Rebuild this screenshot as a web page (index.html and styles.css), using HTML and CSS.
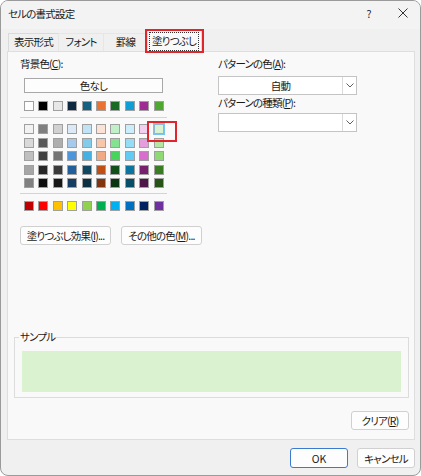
FILE: index.html
```html
<!DOCTYPE html>
<html lang="ja">
<head>
<meta charset="utf-8">
<title>セルの書式設定</title>
<link rel="stylesheet" href="styles.css">
</head>
<body>
<div class="window">
  <div class="titlebar">
    <span class="title">セルの書式設定</span>
    <span class="help">?</span>
    <span class="close"><svg width="10" height="10" viewBox="0 0 10 10"><path d="M0.5 0.5 L9.5 9.5 M9.5 0.5 L0.5 9.5" stroke="#333" stroke-width="1" fill="none"/></svg></span>
  </div>
  <div class="tabs">
    <div class="tab w1">表示形式</div>
    <div class="tab w2">フォント</div>
    <div class="tab w3">罫線</div>
    <div class="tab sel"><span class="focus">塗りつぶし</span></div>
  </div>
  <div class="panel">
    <div class="top">
      <div class="left">
        <div class="lbl">背景色(<u>C</u>):</div>
        <button class="nocolor">色なし</button>
        <div class="swatches row1">
          <span class="sw" style="background:#ffffff"></span>
          <span class="sw" style="background:#000000"></span>
          <span class="sw" style="background:#e8e8e8"></span>
          <span class="sw" style="background:#0e2841"></span>
          <span class="sw" style="background:#156082"></span>
          <span class="sw" style="background:#e97132"></span>
          <span class="sw" style="background:#196b24"></span>
          <span class="sw" style="background:#0f9ed5"></span>
          <span class="sw" style="background:#a02b93"></span>
          <span class="sw" style="background:#4ea72e"></span>
        </div>
        <div class="sep"></div>
        <div class="swatches grid">
          <span class="sw" style="background:#f2f2f2"></span>
          <span class="sw" style="background:#7f7f7f"></span>
          <span class="sw" style="background:#d1d1d1"></span>
          <span class="sw" style="background:#dceaf7"></span>
          <span class="sw" style="background:#c0e4f5"></span>
          <span class="sw" style="background:#fbe2d5"></span>
          <span class="sw" style="background:#c1f0c8"></span>
          <span class="sw" style="background:#caeefb"></span>
          <span class="sw" style="background:#f2ceef"></span>
          <span class="sw picked" style="background:#daf2d0"></span>

          <span class="sw" style="background:#d9d9d9"></span>
          <span class="sw" style="background:#595959"></span>
          <span class="sw" style="background:#aeaeae"></span>
          <span class="sw" style="background:#a6caec"></span>
          <span class="sw" style="background:#83cbeb"></span>
          <span class="sw" style="background:#f7c7ac"></span>
          <span class="sw" style="background:#84e291"></span>
          <span class="sw" style="background:#95dcf7"></span>
          <span class="sw" style="background:#e59edd"></span>
          <span class="sw" style="background:#b5e6a2"></span>

          <span class="sw" style="background:#bfbfbf"></span>
          <span class="sw" style="background:#404040"></span>
          <span class="sw" style="background:#747474"></span>
          <span class="sw" style="background:#4e95d9"></span>
          <span class="sw" style="background:#45b0e1"></span>
          <span class="sw" style="background:#f1a983"></span>
          <span class="sw" style="background:#47d45a"></span>
          <span class="sw" style="background:#61cbf3"></span>
          <span class="sw" style="background:#d86dcd"></span>
          <span class="sw" style="background:#8ed973"></span>

          <span class="sw" style="background:#a6a6a6"></span>
          <span class="sw" style="background:#262626"></span>
          <span class="sw" style="background:#3a3a3a"></span>
          <span class="sw" style="background:#215f9a"></span>
          <span class="sw" style="background:#104862"></span>
          <span class="sw" style="background:#c04f15"></span>
          <span class="sw" style="background:#124f1a"></span>
          <span class="sw" style="background:#0b76a0"></span>
          <span class="sw" style="background:#77206d"></span>
          <span class="sw" style="background:#3a7c22"></span>

          <span class="sw" style="background:#808080"></span>
          <span class="sw" style="background:#0d0d0d"></span>
          <span class="sw" style="background:#171717"></span>
          <span class="sw" style="background:#153d64"></span>
          <span class="sw" style="background:#0a3041"></span>
          <span class="sw" style="background:#80350e"></span>
          <span class="sw" style="background:#0c3511"></span>
          <span class="sw" style="background:#074f69"></span>
          <span class="sw" style="background:#501549"></span>
          <span class="sw" style="background:#275317"></span>
        </div>
        <div class="sep sep2"></div>
        <div class="swatches std">
          <span class="sw" style="background:#c00000"></span>
          <span class="sw" style="background:#ff0000"></span>
          <span class="sw" style="background:#ffc000"></span>
          <span class="sw" style="background:#ffff00"></span>
          <span class="sw" style="background:#92d050"></span>
          <span class="sw" style="background:#00b050"></span>
          <span class="sw" style="background:#00b0f0"></span>
          <span class="sw" style="background:#0070c0"></span>
          <span class="sw" style="background:#002060"></span>
          <span class="sw" style="background:#7030a0"></span>
        </div>
        <div class="btnrow">
          <button class="btn effect">塗りつぶし効果(<u>I</u>)...</button>
          <button class="btn more">その他の色(<u>M</u>)...</button>
        </div>
      </div>
      <div class="right">
        <div class="lbl">パターンの色(<u>A</u>):</div>
        <div class="combo first">
          <span class="val">自動</span>
          <span class="arrow"><svg width="8" height="5" viewBox="0 0 8 5"><path d="M0.5 0.5 L4 4 L7.5 0.5" stroke="#606060" stroke-width="1" fill="none"/></svg></span>
        </div>
        <div class="lbl">パターンの種類(<u>P</u>):</div>
        <div class="combo second">
          <span class="val"></span>
          <span class="arrow"><svg width="8" height="5" viewBox="0 0 8 5"><path d="M0.5 0.5 L4 4 L7.5 0.5" stroke="#606060" stroke-width="1" fill="none"/></svg></span>
        </div>
      </div>
    </div>
    <fieldset class="sample">
      <legend>サンプル</legend>
      <div class="preview"></div>
    </fieldset>
    <div class="clear-row">
      <button class="btn clear">クリア(<u>R</u>)</button>
    </div>
  </div>
  <div class="footer">
    <button class="btn ok">OK</button>
    <button class="btn cancel">キャンセル</button>
  </div>
</div>
</body>
</html>
```

FILE: styles.css
```css
* { box-sizing: border-box; }
html, body { margin: 0; padding: 0; background: #ffffff; }
body {
  font-family: "Noto Sans CJK JP", "Noto Sans", sans-serif;
  font-size: 10.5px;
  letter-spacing: -0.8px;
  color: #1a1a1a;
  font-feature-settings: "palt";
  white-space: nowrap;
}
u { text-decoration: underline; text-underline-offset: 1px; }

.window {
  width: 421px;
  height: 476px;
  background: #f0f0f0;
  border: 1px solid #9a9a9a;
  border-radius: 8px;
  overflow: hidden;
  display: flex;
  flex-direction: column;
}

.titlebar {
  height: 28px;
  background: #f3f3f3;
  display: flex;
  align-items: center;
  padding-left: 7px;
  flex-shrink: 0;
}
.title { flex: 1; line-height: 16px; margin-top: -3px; }
.help { width: 14px; text-align: center; margin-right: 22px; margin-top: -3px; letter-spacing: 0; }
.close { width: 10px; height: 10px; margin-right: 12px; margin-top: -4px; display: flex; }

.tabs {
  height: 22px;
  display: flex;
  align-items: flex-end;
  padding-left: 7px;
  flex-shrink: 0;
}
.tab {
  height: 18px;
  line-height: 16px;
  text-align: center;
  border: 1px solid #dadada;
  border-bottom: none;
  background: #f0f0f0;
  margin-right: -1px;
}
.w1 { width: 51px; }
.w2 { width: 46px; border-color: #e6e6e6; }
.w3 { width: 45px; border-color: #e6e6e6; }
.tab.sel {
  width: 55px;
  height: 22px;
  margin-bottom: -1px;
  background: #f9f9f9;
  position: relative;
  z-index: 2;
  padding: 1px 2px 0 1px;
  border-color: #dcdcdc;
}
.tab.sel::after {
  content: "";
  position: absolute;
  left: -3px;
  right: -3px;
  top: -2px;
  bottom: -1px;
  border: 2px solid #e0262b;
}
.focus {
  display: block;
  height: 19px;
  border: 1px dotted #333;
  line-height: 16px;
}

.panel {
  margin-left: 6px;
  width: 408px;
  height: 389px;
  flex-shrink: 0;
  background: #f9f9f9;
  border: 1px solid #dedede;
  position: relative;
  z-index: 1;
}

.top {
  display: flex;
  padding: 4px 0 0 12px;
}
.left { width: 198px; }
.right { flex: 1; }
.lbl { line-height: 16px; height: 16px; }

.nocolor {
  display: block;
  margin: 6px 0 0 4px;
  width: 139px;
  height: 15px;
  padding: 0;
  font: inherit;
  letter-spacing: inherit;
  line-height: 13px;
  background: #fdfdfd;
  border: 1px solid #a8a8a8;
  color: #1a1a1a;
}

.swatches {
  display: grid;
  grid-template-columns: repeat(10, 10px);
  column-gap: 4.4px;
  margin-left: 4px;
}
.row1 { margin-top: 8px; }
.grid { margin-top: 6px; row-gap: 3.6px; }
.std { margin-top: 7px; }
.sw {
  width: 10px;
  height: 10px;
  border: 1px solid #a0a0a0;
  display: block;
}
.sw.picked {
  position: relative;
  outline: 1px solid #7cc4f0;
  outline-offset: 0;
  border-color: #90b8d0;
}
.sw.picked::after {
  content: "";
  position: absolute;
  left: -8px;
  top: -4px;
  width: 26px;
  height: 17px;
  border: 2px solid #e0262b;
}
.sep {
  margin-top: 6px;
  width: 147px;
  height: 1px;
  background: #d4d4d4;
}
.sep2 { margin-top: 5px; }

.btnrow {
  display: flex;
  gap: 10px;
  margin-top: 15px;
}
.btn {
  height: 19px;
  padding: 0;
  font: inherit;
  letter-spacing: inherit;
  line-height: 17px;
  color: #1a1a1a;
  background: #fdfdfd;
  border: 1px solid #d0d0d0;
  border-radius: 3px;
  text-align: center;
  white-space: nowrap;
}
.effect { width: 91px; }
.more { width: 81px; }

.combo {
  width: 139px;
  height: 19px;
  margin-top: 4px;
  display: flex;
  background: #ffffff;
  border: 1px solid #c4c4c4;
}
.combo.second { margin-top: 2px; }
.val { flex: 1; text-align: center; line-height: 17px; }
.arrow {
  width: 14px;
  border-left: 1px solid #dadada;
  display: flex;
  align-items: center;
  justify-content: center;
}

.sample {
  margin: 84px 5px 0 6px;
  padding: 6px 7px 5px;
  border: 1px solid #dcdcdc;
  min-width: 0;
}
.sample legend {
  padding: 0 1px;
  margin-left: -3px;
  line-height: 16px;
}
.preview {
  height: 41px;
  background: #daf2d0;
}

.clear-row {
  display: flex;
  justify-content: flex-end;
  margin-top: 13px;
  padding-right: 5px;
}
.clear { width: 58px; }

.footer {
  display: flex;
  justify-content: flex-end;
  gap: 9px;
  margin-top: 8px;
  padding-right: 5px;
}
.ok { width: 58px; height: 20px; border-color: #3a7bd0; letter-spacing: 0; }
.cancel { width: 58px; height: 20px; }
```
